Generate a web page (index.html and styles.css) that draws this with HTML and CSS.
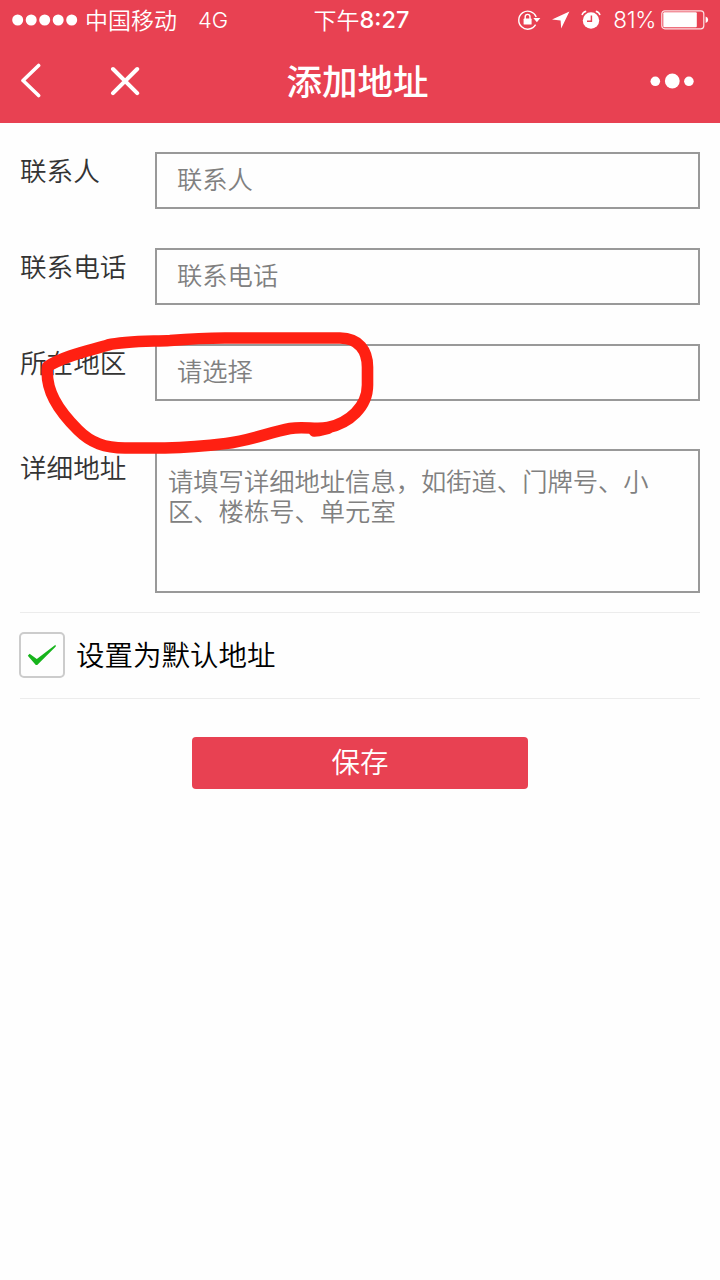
FILE: index.html
```html
<!DOCTYPE html>
<html lang="zh-CN">
<head>
	<meta charset="utf-8">
	<meta name="viewport" content="width=device-width, initial-scale=1">
	<title>添加地址</title>
	<link rel="stylesheet" href="styles.css">
</head>
<body>
<header class="header">
	<div class="status">
		<div class="status-left">
			<svg class="signal" width="66" height="12" viewBox="0 0 66 12" fill="#fff">
				<circle cx="5.7" cy="6" r="5.5"/>
				<circle cx="19.2" cy="6" r="5.5"/>
				<circle cx="32.7" cy="6" r="5.5"/>
				<circle cx="46.2" cy="6" r="5.5"/>
				<circle cx="59.7" cy="6" r="5.5"/>
			</svg>
			<span class="carrier">中国移动</span>
			<span class="network">4G</span>
		</div>
		<div class="time"><span class="ampm">下午</span><b>8:27</b></div>
		<div class="status-right">
			<svg width="24" height="22" viewBox="0 0 24 22">
				<path d="M18.6 15.6A9 9 0 1 1 19.2 8" fill="none" stroke="#fff" stroke-width="1.4"/>
				<path d="M16.3 9h7l-3.4 4.2z" fill="#fff"/>
				<rect x="6.6" y="9.6" width="8" height="6" rx=".6" fill="#fff"/>
				<path d="M8.2 10V7.8a2.4 2.4 0 0 1 4.800 0V10" fill="none" stroke="#fff" stroke-width="1.4"/>
			</svg>
			<svg width="18" height="18" viewBox="0 0 18 18">
				<path d="M17.4.6L0 8.6l8.6.8.6 8.2z" fill="#fff"/>
			</svg>
			<svg width="20" height="20" viewBox="0 0 20 20">
				<circle cx="10" cy="10.5" r="8.2" fill="#fff"/>
				<path d="M1 5.2Q1.8 2 5.2 1.3M19 5.2Q18.2 2 14.8 1.3" fill="none" stroke="#fff" stroke-width="1.4"/>
				<path d="M10.4 5.5v5.8H6" fill="none" stroke="#e84152" stroke-width="1.5"/>
			</svg>
			<span class="percent">81%</span>
			<svg width="48" height="20" viewBox="0 0 48 20">
				<rect x=".8" y=".8" width="42" height="18" rx="3" fill="none" stroke="#fff" stroke-opacity=".85" stroke-width="1.2"/>
				<rect x="2.3" y="2.3" width="33.5" height="15" rx="1" fill="#fff"/>
				<path d="M44.6 6.5q2.6 1 2.6 3.3t-2.6 3.3z" fill="#fff"/>
			</svg>
		</div>
	</div>
	<div class="nav">
		<div class="nav-left">
			<svg width="22" height="36" viewBox="0 0 22 36">
				<path d="M19.6 2.500L4 17.500L19.600 32.500" fill="none" stroke="#fff" stroke-width="3.6" stroke-linecap="round" stroke-linejoin="round"/>
			</svg>
			<svg width="30" height="30" viewBox="0 0 30 30">
				<path d="M3 3L27.200 27.200M27.200 3L3 27.200" fill="none" stroke="#fff" stroke-width="4" stroke-linecap="round"/>
			</svg>
		</div>
		<h1 class="title">添加地址</h1>
		<div class="nav-right">
			<svg width="44" height="16" viewBox="0 0 44 16" fill="#fff">
				<circle cx="5.3" cy="8.3" r="4.8"/>
				<circle cx="22.3" cy="8" r="7.4"/>
				<circle cx="38.9" cy="8.3" r="4.8"/>
			</svg>
		</div>
	</div>
</header>

<form class="form">
	<div class="row">
		<label class="label" for="name">联系人</label>
		<input class="input" type="text" id="name" placeholder="联系人">
	</div>
	<div class="row">
		<label class="label" for="phone">联系电话</label>
		<input class="input" type="text" id="phone" placeholder="联系电话">
	</div>
	<div class="row row-area">
		<label class="label" for="area">所在地区</label>
		<input class="input" type="text" id="area" placeholder="请选择">
		<!-- hand drawn mark -->
		<svg class="mark" width="360" height="140" viewBox="30 320 360 140">
			<path d="M47.5 366.5C65 355 92 350 108 345C125 341 150 341.5 170 340.5Q200 338 225 338H340C359 338 367.5 351 367.5 367V385C367.5 407 349 423 328 427.5C315 430 305 426 290 428.5C270 432 250 441 226 443.5C205 446 185 447.5 165 448H125C105 448 91 443 78 430C58 410 45 390 47.5 366.5Z" fill="none" stroke="#ff2012" stroke-width="11.6" stroke-linejoin="round"/>
			<path d="M314 431.500L319 431L328 429" fill="none" stroke="#ff2012" stroke-width="10.5" stroke-linecap="round"/>
		</svg>
	</div>
	<div class="row">
		<label class="label" for="detail">详细地址</label>
		<textarea class="input textarea" id="detail" placeholder="请填写详细地址信息，如街道、门牌号、小区、楼栋号、单元室"></textarea>
	</div>
	<div class="default">
		<span class="checkbox">
			<svg width="30" height="22" viewBox="0 0 30 22">
				<path d="M.8 11.8L2.600 9.800L9.800 15L28.500 .8L28.800 2.400L10.200 21L8.800 21Z" fill="#17b41c"/>
			</svg>
		</span>
		<span class="default-text">设置为默认地址</span>
	</div>
	<button class="save" type="button">保存</button>
</form>
</body>
</html>
```
FILE: styles.css
```css
*{
	box-sizing:border-box;
}
body{
	margin:0;
	background-color:#fefefe;
	font-family:"Noto Sans CJK SC",sans-serif;
}
svg{
	display:block;
	flex:none;
}

/* header */
.header{
	height:123px;
	background-color:#e84152;
	color:#fff;
}
.status{
	display:grid;
	grid-template-columns:1fr auto 1fr;
	align-items:center;
	height:40px;
	padding:0 11px 0 12px;
	font-size:23px;
	line-height:38px;
}
.status-left,
.status-right{
	display:flex;
	align-items:center;
	height:38px;
}
.carrier{
	margin-left:7px;
	padding-bottom:3px;
	font-weight:350;
}
.network{
	margin-left:21px;
	font-family:Inter,sans-serif;
	font-size:22px;
	font-weight:300;
}
.time{
	display:flex;
	align-items:center;
	height:38px;
	padding-left:2px;
}
.ampm{
	padding-bottom:3px;
	font-weight:350;
}
.time b{
	font-family:Inter,sans-serif;
	font-size:23.5px;
	font-weight:500;
}
.status-right{
	justify-content:flex-end;
	gap:11px;
}
.percent{
	margin:0 -6px 0 1px;
	font-family:Inter,sans-serif;
	font-size:22.5px;
	font-weight:300;
	letter-spacing:-.3px;
}
.nav{
	display:grid;
	grid-template-columns:1fr auto 1fr;
	align-items:center;
	height:82px;
	padding:0 26px 0 19px;
}
.nav-left{
	display:flex;
	align-items:center;
	gap:69px;
}
.nav-right{
	display:flex;
	justify-content:flex-end;
}
.title{
	margin:0;
	padding:0 0 3px 2px;
	font-size:35.5px;
	font-weight:500;
	line-height:79px;
}

/* form */
.form{
	padding:29px 20px 0;
}
.row{
	display:flex;
	margin-bottom:39px;
}
.row-area{
	position:relative;
	margin-bottom:48px;
}
.label{
	width:135px;
	color:#333;
	font-size:26.6px;
	font-weight:350;
	line-height:36px;
}
.input{
	flex:1;
	min-width:0;
	height:57px;
	padding:0 20px 5px;
	border:2px solid #999;
	border-radius:0;
	background:none;
	font-family:inherit;
	font-size:25.3px;
	font-weight:350;
	outline:none;
}
.input::placeholder{
	color:#808080;
	opacity:1;
}
.textarea{
	height:144px;
	padding:15px 30px 0 11px;
	line-height:29.5px;
	resize:none;
}
.mark{
	position:absolute;
	left:10px;
	top:-24px;
}
.default{
	display:flex;
	align-items:center;
	height:87px;
	margin-top:-20px;
	border-top:1px solid #ececec;
	border-bottom:1px solid #ececec;
}
.checkbox{
	display:flex;
	align-items:center;
	justify-content:center;
	width:46px;
	height:46px;
	margin:0 0 1px -1px;
	border:2px solid #ccc;
	border-radius:5px;
}
.default-text{
	margin-left:11px;
	padding-bottom:3px;
	font-size:28.5px;
	font-weight:350;
	line-height:46px;
}
.save{
	display:block;
	width:336px;
	height:52px;
	margin:38px auto 0;
	padding:0 0 5px;
	border:none;
	border-radius:4px;
	background-color:#e84152;
	color:#fff;
	font-family:inherit;
	font-size:28.5px;
	font-weight:350;
	line-height:46px;
}
```
